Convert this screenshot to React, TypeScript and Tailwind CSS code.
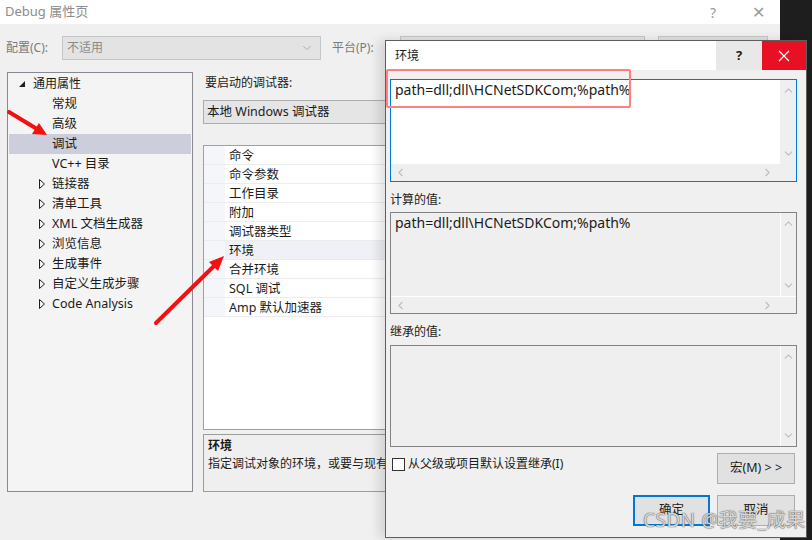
import { ChevronDown, ChevronLeft, ChevronRight, ChevronUp } from "lucide-react"

const tree = [
  { label: "常规", kind: "leaf" },
  { label: "高级", kind: "leaf" },
  { label: "调试", kind: "leaf", selected: true },
  { label: "VC++ 目录", kind: "leaf" },
  { label: "链接器", kind: "closed" },
  { label: "清单工具", kind: "closed" },
  { label: "XML 文档生成器", kind: "closed" },
  { label: "浏览信息", kind: "closed" },
  { label: "生成事件", kind: "closed" },
  { label: "自定义生成步骤", kind: "closed" },
  { label: "Code Analysis", kind: "closed" },
]

const gridRows = ["命令", "命令参数", "工作目录", "附加", "调试器类型", "环境", "合并环境", "SQL 调试", "Amp 默认加速器"]

const VALUE = "path=dll;dll\\HCNetSDKCom;%path%"

function VScroll({ white = false }: { white?: boolean }) {
  return (
    <div className={`w-[16px] flex flex-col justify-between items-center py-[4px] ${white ? "bg-[#efefef]" : "bg-[#efefef] border-l border-white"}`}>
      <ChevronUp size={13} strokeWidth={2} className="text-[#bdbdbd]" />
      <ChevronDown size={13} strokeWidth={2} className="text-[#bdbdbd]" />
    </div>
  )
}

function HScroll({ line = false }: { line?: boolean }) {
  return (
    <div className={`h-[17px] flex items-center justify-between pl-[3px] pr-[22px] bg-[#efefef] ${line ? "border-t border-white" : ""}`}>
      <ChevronLeft size={13} strokeWidth={2} className="text-[#bdbdbd]" />
      <ChevronRight size={13} strokeWidth={2} className="text-[#bdbdbd]" />
    </div>
  )
}

export default function App() {
  return (
    <div className="relative w-[812px] h-[540px] overflow-hidden bg-[#1e1e1e] text-[12px] text-[#1b1b1b] font-['Noto_Sans','Noto_Sans_CJK_SC',sans-serif]">
      {/* outer property pages window */}
      <div className="w-[780px] h-full bg-[#f0f0f0] flex flex-col">
        <div className="h-[24px] bg-white flex items-center pl-[5px] text-[13px] text-[#8c8c8c]">
          <span className="flex-1">Debug 属性页</span>
          <span className="w-[46px] text-center text-[14px] text-[#9a9a9a]">?</span>
          <span className="w-[44px] text-center text-[16px] text-[#9a9a9a]">✕</span>
        </div>

        <div className="mt-[12px] h-[24px] flex items-center pl-[6px] text-[#7a7a7a]">
          <span className="w-[56px]">配置(C):</span>
          <div className="w-[259px] h-[24px] bg-[#e3e3e3] border border-[#c6c6c6] flex items-center pl-[4px] pr-[6px] text-[#8a8a8a]">
            <span className="flex-1">不适用</span>
            <ChevronDown size={14} strokeWidth={1.5} className="text-[#a8a8a8]" />
          </div>
          <span className="ml-[11px] w-[68px]">平台(P):</span>
          <div className="w-[245px] h-[24px] bg-[#e3e3e3] border border-[#c6c6c6]" />
          <div className="ml-[13px] w-[110px] h-[24px] bg-[#e1e1e1] border border-[#c6c6c6]" />
        </div>

        <div className="mt-[12px] flex pl-[7px]">
          {/* tree */}
          <div className="w-[186px] h-[420px] bg-[#f4f4f4] border border-[#878a92] p-px">
            <div className="h-[20px] flex items-center">
              <svg width="8" height="8" viewBox="0 0 8 8" className="ml-[9px]">
                <polygon points="7,1 7,7 1,7" fill="#1e1e1e" />
              </svg>
              <span className="ml-[7px]">通用属性</span>
            </div>
            {tree.map((t) => (
              <div key={t.label} className={`h-[20px] flex items-center ${t.selected ? "bg-[#cccedb]" : ""}`}>
                <div className="w-[43px] flex justify-end pr-[7px]">
                  {t.kind === "closed" && (
                    <svg width="6" height="10" viewBox="0 0 6 10">
                      <polygon points="0.5,0.5 5.5,5 0.5,9.5" fill="none" stroke="#1e1e1e" strokeWidth="1" />
                    </svg>
                  )}
                </div>
                <span className="text-[12.5px]">{t.label}</span>
              </div>
            ))}
          </div>

          {/* middle column */}
          <div className="ml-[10px] w-[560px] flex flex-col">
            <div className="h-[20px] leading-[20px] pl-[2px] pt-px">要启动的调试器:</div>
            <div className="mt-[8px] h-[24px] bg-[#e5e5e5] border border-[#adadad] flex items-center pl-[3px] text-[12.5px]">
              本地 Windows 调试器
            </div>
            <div className="mt-[21px] h-[285px] bg-white border border-[#a0a0a0]">
              {gridRows.map((r) => (
                <div key={r} className={`h-[19px] flex border-b border-[#ececec] ${r === "环境" ? "bg-[#f0f1f6]" : ""}`}>
                  <div className="w-[21px] bg-[#f4f6fa]" />
                  <span className="pl-[4px] pt-[2px] leading-[16px] text-[12.5px]">{r}</span>
                </div>
              ))}
            </div>
            <div className="mt-[4px] h-[58px] bg-[#efefef] border border-[#9c9c9c] px-[4px] pt-[2px]">
              <div className="font-bold leading-[18px]">环境</div>
              <div className="leading-[18px]">指定调试对象的环境，或要与现有</div>
            </div>
          </div>
        </div>
      </div>

      {/* environment editor dialog */}
      <div className="absolute left-[385px] top-[40px] w-[422px] h-[498px] bg-[#f0f0f0] border border-[#5e5e5e] shadow-[-6px_0_10px_rgba(0,0,0,0.12)] flex flex-col">
        <div className="h-[29px] bg-white flex items-stretch">
          <span className="flex-1 flex items-center pl-[9px]">环境</span>
          <span className="w-[46px] bg-[#e8e8e8] flex items-center justify-center font-bold text-[13px]">?</span>
          <span className="w-[44px] bg-[#e81123] flex items-center justify-center">
            <svg width="12" height="12" viewBox="0 0 12 12">
              <path d="M1 1L11 11M11 1L1 11" stroke="white" strokeWidth="1.2" />
            </svg>
          </span>
        </div>

        <div className="pl-[4px] flex flex-col w-[411px]">
          <div className="mt-[9px] h-[103px] border border-[#0078d7] flex flex-col">
            <div className="flex-1 flex">
              <div className="flex-1 bg-white pl-[4px] pt-[1px] leading-[18px] text-[14px]">{VALUE}</div>
              <VScroll white />
            </div>
            <HScroll />
          </div>

          <div className="mt-[9px] h-[18px] leading-[18px]">计算的值:</div>
          <div className="mt-[3px] h-[102px] border border-[#828282] flex flex-col">
            <div className="flex-1 flex">
              <div className="flex-1 bg-[#efefef] pl-[4px] pt-[1px] leading-[18px] text-[14px]">{VALUE}</div>
              <VScroll />
            </div>
            <HScroll line />
          </div>

          <div className="mt-[9px] h-[18px] leading-[18px]">继承的值:</div>
          <div className="mt-[4px] h-[102px] border border-[#828282] flex">
            <div className="flex-1 bg-[#efefef]" />
            <VScroll />
          </div>

          <div className="mt-[6px] h-[31px] flex items-start">
            <div className="mt-[5px] ml-[2px] w-[13px] h-[13px] bg-white border border-[#333]" />
            <span className="ml-[3px] mt-[3px] leading-[16px]">从父级或项目默认设置继承(I)</span>
            <button className="ml-auto mr-[2px] w-[78px] h-[31px] bg-[#e1e1e1] border border-[#adadad] text-[12.5px]">
              宏(M) &gt; &gt;
            </button>
          </div>

          <div className="mt-[11px] flex justify-end gap-[7px] pr-[2px]">
            <button className="w-[77px] h-[31px] bg-[#e1e1e1] border-2 border-[#0078d7] text-[12.5px]">确定</button>
            <button className="w-[78px] h-[31px] bg-[#e1e1e1] border border-[#adadad] text-[12.5px]">取消</button>
          </div>
        </div>
      </div>

      {/* red highlight around the edited value */}
      <div className="absolute left-[386px] top-[69px] w-[245px] h-[39px] border-2 border-[#ff8080] rounded-[2px]" />

      {/* annotation arrows */}
      <svg className="absolute left-0 top-0 pointer-events-none" width="812" height="540" viewBox="0 0 812 540">
        <line x1="9" y1="112" x2="37" y2="129" stroke="#f51010" strokeWidth="4" strokeLinecap="round" />
        <polygon points="47,135 39,123 32,134" fill="#f51010" />
        <line x1="156" y1="323" x2="214" y2="266" stroke="#f51010" strokeWidth="4" strokeLinecap="round" />
        <polygon points="224,256 218,271 209,262" fill="#f51010" />
      </svg>

      {/* watermark */}
      <div className="absolute left-[643px] top-[506px] text-[19px] text-white/75 [text-shadow:0_0_1px_#555,0_0_1px_#555] tracking-[0.5px]">
        CSDN @我要_成果
      </div>
    </div>
  )
}
